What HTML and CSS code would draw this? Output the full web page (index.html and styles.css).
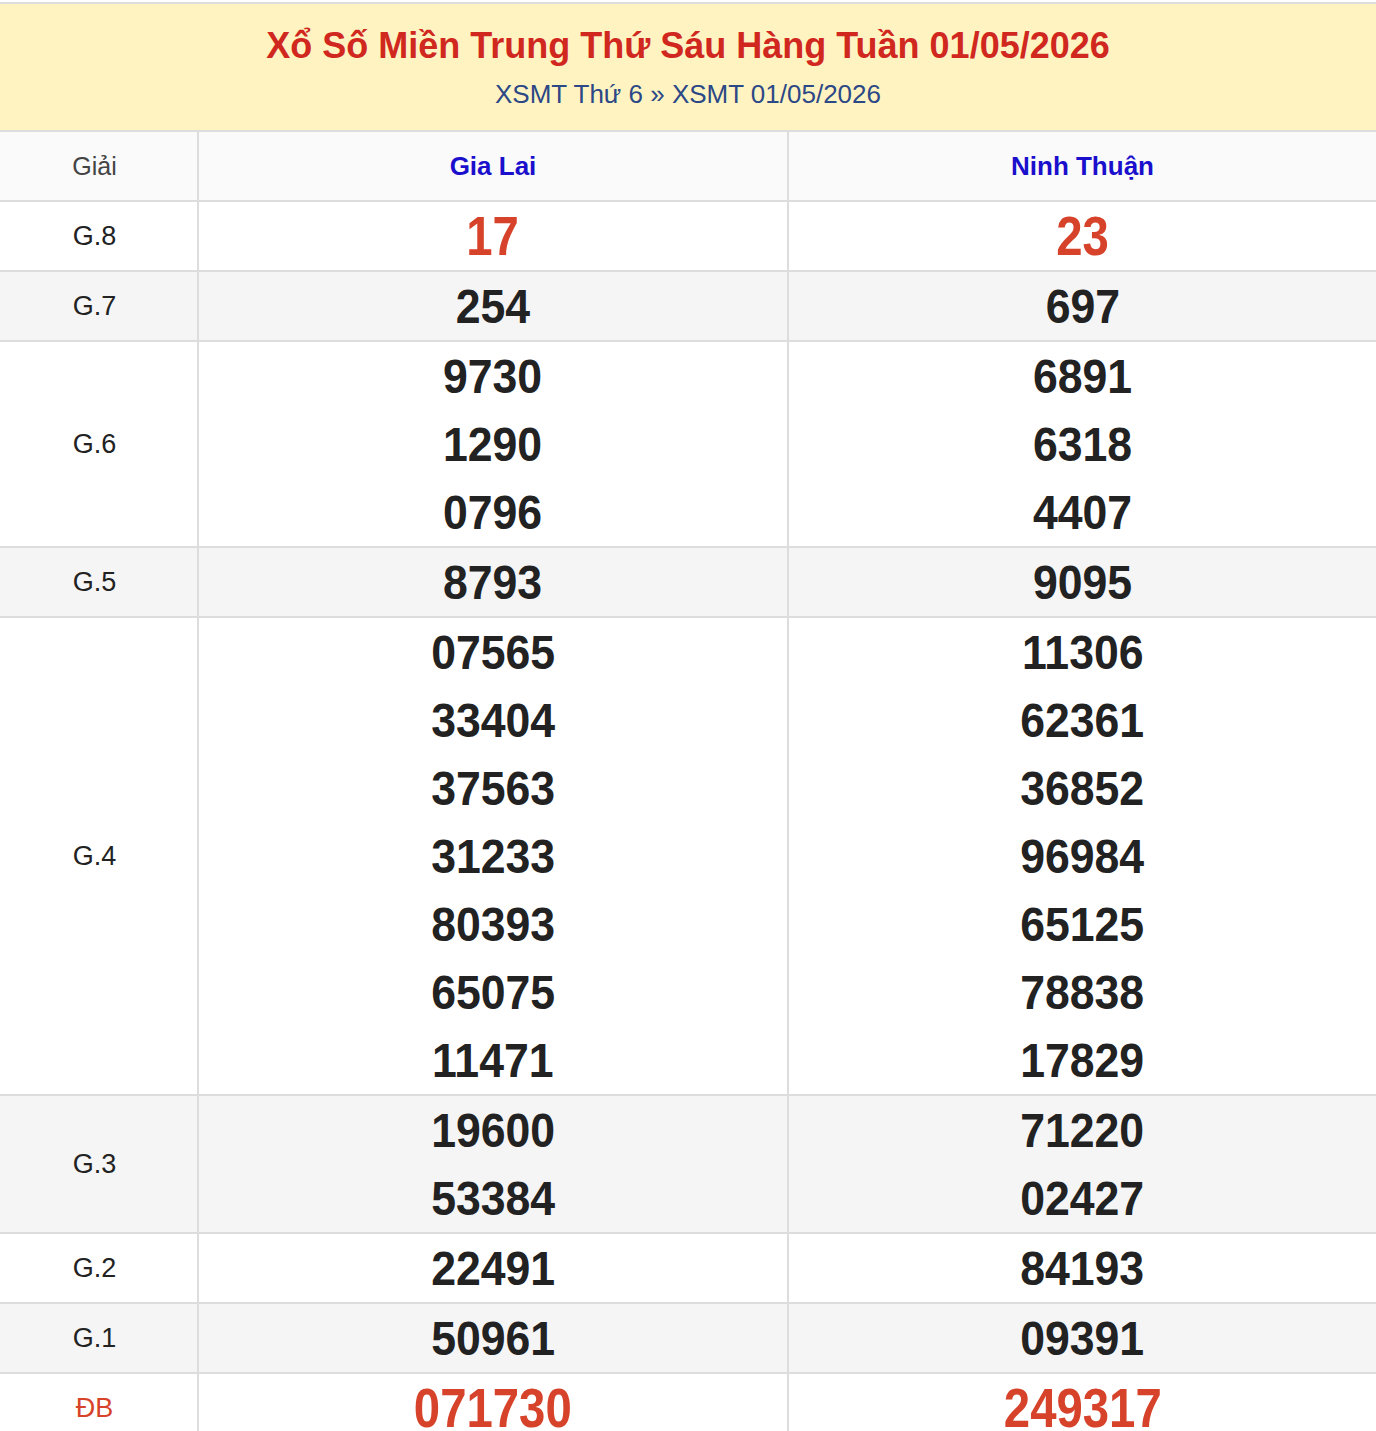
FILE: index.html
```html
<!DOCTYPE html>
<html lang="vi">
<head>
<meta charset="utf-8">
<title>XSMT 01/05/2026</title>
<link rel="stylesheet" href="styles.css">
</head>
<body>
<div class="box">
  <div class="head">
    <h1 class="title">Xổ Số Miền Trung Thứ Sáu Hàng Tuần 01/05/2026</h1>
    <div class="crumb"><a href="#">XSMT Thứ 6</a> » <a href="#">XSMT 01/05/2026</a></div>
  </div>
  <table class="kq">
    <colgroup><col class="c1"><col class="c2"><col class="c3"></colgroup>
    <thead>
      <tr><th class="lbl">Giải</th><th class="prov">Gia Lai</th><th class="prov">Ninh Thuận</th></tr>
    </thead>
    <tbody>
      <tr class="w"><td class="lbl">G.8</td><td><div class="n red big"><span>17</span></div></td><td><div class="n red big"><span>23</span></div></td></tr>
      <tr class="g"><td class="lbl">G.7</td><td><div class="n"><span>254</span></div></td><td><div class="n"><span>697</span></div></td></tr>
      <tr class="w"><td class="lbl">G.6</td><td><div class="n"><span>9730</span></div><div class="n"><span>1290</span></div><div class="n"><span>0796</span></div></td><td><div class="n"><span>6891</span></div><div class="n"><span>6318</span></div><div class="n"><span>4407</span></div></td></tr>
      <tr class="g"><td class="lbl">G.5</td><td><div class="n"><span>8793</span></div></td><td><div class="n"><span>9095</span></div></td></tr>
      <tr class="w"><td class="lbl">G.4</td><td><div class="n"><span>07565</span></div><div class="n"><span>33404</span></div><div class="n"><span>37563</span></div><div class="n"><span>31233</span></div><div class="n"><span>80393</span></div><div class="n"><span>65075</span></div><div class="n"><span>11471</span></div></td><td><div class="n"><span>11306</span></div><div class="n"><span>62361</span></div><div class="n"><span>36852</span></div><div class="n"><span>96984</span></div><div class="n"><span>65125</span></div><div class="n"><span>78838</span></div><div class="n"><span>17829</span></div></td></tr>
      <tr class="g"><td class="lbl">G.3</td><td><div class="n"><span>19600</span></div><div class="n"><span>53384</span></div></td><td><div class="n"><span>71220</span></div><div class="n"><span>02427</span></div></td></tr>
      <tr class="w"><td class="lbl">G.2</td><td><div class="n"><span>22491</span></div></td><td><div class="n"><span>84193</span></div></td></tr>
      <tr class="g"><td class="lbl">G.1</td><td><div class="n"><span>50961</span></div></td><td><div class="n"><span>09391</span></div></td></tr>
      <tr class="w"><td class="lbl db">ĐB</td><td><div class="n red big"><span>071730</span></div></td><td><div class="n red big"><span>249317</span></div></td></tr>
    </tbody>
  </table>
</div>
</body>
</html>
```
FILE: styles.css
```css
html, body {
  margin: 0;
  padding: 0;
  background: #fff;
}
body {
  font-family: "Liberation Sans", Arial, sans-serif;
  padding-top: 2px;
}
.box {
  border-top: 2px solid #dddddd;
}
.head {
  background: #fff4c1;
  height: 126px;
  box-sizing: border-box;
  padding-top: 20px;
  text-align: center;
}
.title {
  margin: 0;
  font-size: 36px;
  line-height: 44px;
  font-weight: bold;
  color: #d0281f;
}
.crumb {
  margin-top: 9px;
  font-size: 26px;
  line-height: 34px;
  color: #2c4886;
}
.crumb a {
  color: #2c4886;
  text-decoration: none;
}
.kq {
  width: 100%;
  border-collapse: collapse;
  table-layout: fixed;
}
.c1 { width: 198px; }
.c2 { width: 590px; }
.kq th, .kq td {
  border: 2px solid #dddddd;
  padding: 0;
  text-align: center;
  vertical-align: middle;
}
.kq tr > :first-child { border-left: 0; padding-right: 8px; }
.kq tr > :last-child { border-right: 0; }
.kq thead th {
  height: 68px;
  background: #fafafa;
  font-weight: normal;
}
.kq th.lbl {
  font-size: 25px;
  color: #444;
}
.kq th.prov {
  font-size: 26px;
  font-weight: bold;
  color: #1a0fcc;
}
td.lbl {
  font-size: 27px;
  color: #222;
}
td.db {
  color: #d7432a;
}
tr.g td { background: #f5f5f5; }
tr.w td { background: #fff; }
.n {
  height: 68px;
  line-height: 68px;
  font-size: 49px;
  font-weight: bold;
  color: #222;
}
.n span {
  display: inline-block;
  transform: scaleX(0.91);
}
.n.big {
  font-size: 55px;
}
.n.big span {
  transform: scaleX(0.86);
}
.n.red {
  color: #d7432a;
}
```
